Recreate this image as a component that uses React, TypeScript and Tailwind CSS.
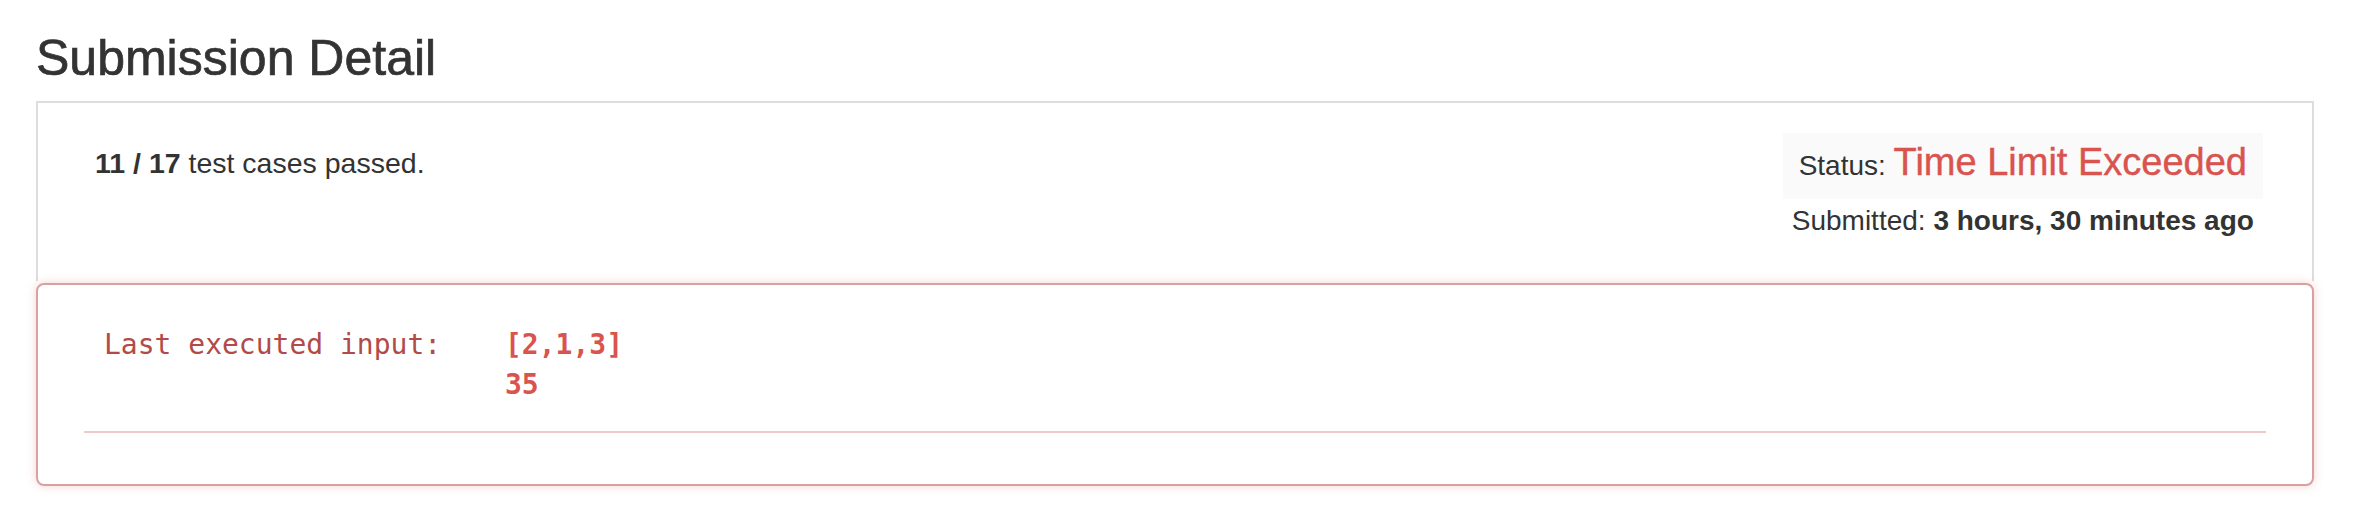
export default function App() {
  const sans = { fontFamily: '"Liberation Sans", Arial, sans-serif' };
  return (
    <div className="min-h-screen bg-white text-[#333]" style={sans}>
      <h3 className="ml-[36px] mr-[48px] pt-[34px] pb-[19px] text-[50px] leading-[48px] font-medium [-webkit-text-stroke:0.7px_#333]">
        Submission Detail
      </h3>

      <div className="ml-[36px] mr-[48px]">
        {/* summary panel */}
        <div className="flex h-[180px] items-start justify-between border-2 border-b-0 border-[#ddd] pl-[57px] pr-[49px] pt-[30px]">
          <div className="mt-[10px] text-[28.5px] leading-[40px]">
            <b>11 / 17</b> test cases passed.
          </div>
          <div className="flex flex-col items-center">
            <div className="bg-[#fafafa] px-[16px] py-[9px] leading-[40px]">
              <span className="text-[28px]">Status: </span>
              <span className="text-[38px] text-[#d9534f] [-webkit-text-stroke:0.4px_#d9534f]">Time Limit Exceeded</span>
            </div>
            <div className="mt-[2px] text-[28px] leading-[40px]">
              Submitted: <b>3 hours, 30 minutes ago</b>
            </div>
          </div>
        </div>

        {/* error panel */}
        <div className="mt-[2px] rounded-[8px] border-2 border-[#d8a0a0] px-[46px] pt-[40px] pb-[51px] shadow-[0_0_10px_rgba(217,83,79,0.25)]">
          <div
            className="grid grid-cols-[401px_1fr] pl-[20px] text-[28px] leading-[40px]"
            style={{ fontFamily: '"DejaVu Sans Mono", "Liberation Mono", monospace' }}
          >
            <span className="text-[#b24a48]">Last executed input:</span>
            <div className="font-bold text-[#d9534f]">
              <div>[2,1,3]</div>
              <div>35</div>
            </div>
          </div>
          <div className="mt-[26px] h-[2px] bg-[#efcaca]" />
        </div>
      </div>
    </div>
  );
}
